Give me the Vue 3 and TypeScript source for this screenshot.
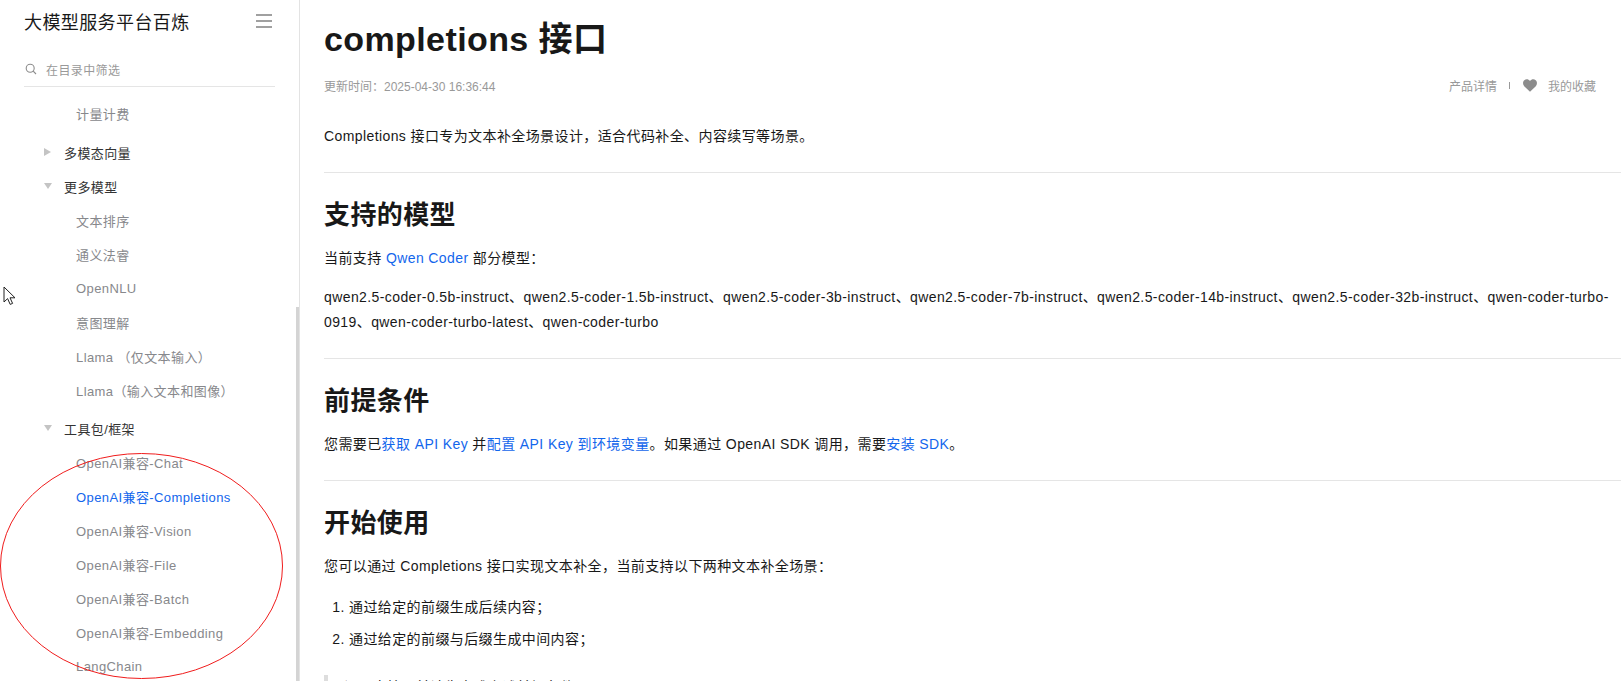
<script setup lang="ts">
interface NavRow { label: string; kind: 'leaf' | 'open' | 'closed' | 'active'; gap?: number }
const rows: NavRow[] = [
  { label: '计量计费', kind: 'leaf' },
  { label: '多模态向量', kind: 'closed', gap: 5 },
  { label: '更多模型', kind: 'open' },
  { label: '文本排序', kind: 'leaf' },
  { label: '通义法睿', kind: 'leaf' },
  { label: 'OpenNLU', kind: 'leaf' },
  { label: '意图理解', kind: 'leaf' },
  { label: 'Llama （仅文本输入）', kind: 'leaf' },
  { label: 'Llama（输入文本和图像）', kind: 'leaf' },
  { label: '工具包/框架', kind: 'open', gap: 4 },
  { label: 'OpenAI兼容-Chat', kind: 'leaf' },
  { label: 'OpenAI兼容-Completions', kind: 'active' },
  { label: 'OpenAI兼容-Vision', kind: 'leaf' },
  { label: 'OpenAI兼容-File', kind: 'leaf' },
  { label: 'OpenAI兼容-Batch', kind: 'leaf' },
  { label: 'OpenAI兼容-Embedding', kind: 'leaf' },
  { label: 'LangChain', kind: 'leaf' }
]
</script>

<template>
  <div class="page">
    <aside class="side">
      <div class="brand">
        <span class="brand-name">大模型服务平台百炼</span>
        <svg class="menu" width="18" height="16" viewBox="0 0 18 16"><path d="M1 2h16M1 8h16M1 14h16" stroke="#a0a0a0" stroke-width="2" fill="none" /></svg>
      </div>
      <div class="search">
        <svg width="12" height="12" viewBox="0 0 12 12"><circle cx="5.2" cy="5.2" r="4" stroke="#8c8c8c" stroke-width="1.1" fill="none" /><path d="M8.2 8.2l2.8 2.8" stroke="#8c8c8c" stroke-width="1.1" /></svg>
        <span>在目录中筛选</span>
      </div>
      <nav class="nav">
        <div
          v-for="r in rows"
          :key="r.label"
          class="row"
          :class="r.kind"
          :style="r.gap ? { marginTop: r.gap + 'px' } : undefined"
        >
          <svg v-if="r.kind === 'closed'" class="tri" width="8" height="10" viewBox="0 0 8 10"><path d="M0 1l7 4-7 4z" fill="#c4c4c4" /></svg>
          <svg v-if="r.kind === 'open'" class="tri" width="8" height="10" viewBox="0 0 8 10"><path d="M0 2h8L4 8z" fill="#c4c4c4" /></svg>
          <span>{{ r.label }}</span>
        </div>
      </nav>
      <div class="thumb"></div>
    </aside>
    <main class="main">
      <h1>completions 接口</h1>
      <div class="meta">
        <span>更新时间：2025-04-30 16:36:44</span>
        <div class="meta-right">
          <span>产品详情</span>
          <i class="sep"></i>
          <svg class="heart" width="14" height="13" viewBox="0 0 14 13"><path d="M7 12.8L1.2 7.2C-.4 5.4-.3 2.6 1.3 1.2 3 -.2 5.6.1 7 2 8.4.1 11-.2 12.7 1.2 14.3 2.6 14.4 5.4 12.8 7.2z" fill="#8c8c8c" /></svg>
          <span>我的收藏</span>
        </div>
      </div>
      <p class="intro">Completions 接口专为文本补全场景设计，适合代码补全、内容续写等场景。</p>
      <hr />
      <h2>支持的模型</h2>
      <p class="lead">当前支持 <a>Qwen Coder</a> 部分模型：</p>
      <p class="models">qwen2.5-coder-0.5b-instruct、qwen2.5-coder-1.5b-instruct、qwen2.5-coder-3b-instruct、qwen2.5-coder-7b-instruct、qwen2.5-coder-14b-instruct、qwen2.5-coder-32b-instruct、qwen-coder-turbo-0919、qwen-coder-turbo-latest、qwen-coder-turbo</p>
      <hr />
      <h2>前提条件</h2>
      <p class="tight">您需要已<a>获取 API Key</a> 并<a>配置 API Key 到环境变量</a>。如果通过 OpenAI SDK 调用，需要<a>安装 SDK</a>。</p>
      <hr />
      <h2>开始使用</h2>
      <p>您可以通过 Completions 接口实现文本补全，当前支持以下两种文本补全场景：</p>
      <ol>
        <li>通过给定的前缀生成后续内容；</li>
        <li>通过给定的前缀与后缀生成中间内容；</li>
      </ol>
      <blockquote>调用本接口前请先完成上述前提条件</blockquote>
    </main>
    <svg class="ring" width="286" height="230" viewBox="0 0 286 230"><ellipse cx="142.5" cy="114" rx="141" ry="112.5" fill="none" stroke="#f01c1c" stroke-width="1" /></svg>
    <svg class="cursor" width="14" height="20" viewBox="0 0 14 20"><path d="M1 1v15l3.6-3.4 2.6 5.8 2.4-1-2.6-5.6H12z" fill="#fff" stroke="#222" stroke-width="1" /></svg>
  </div>
</template>

<style>
html, body { margin: 0; overflow: hidden; background: #fff; }
</style>

<style scoped>
.page {
  position: relative;
  display: flex;
  width: 1621px;
  height: 681px;
  overflow: hidden;
  font-family: "Liberation Sans", "Noto Sans CJK SC", sans-serif;
  letter-spacing: 0.4px;
  color: #181818;
}
.side {
  position: relative;
  flex: none;
  box-sizing: border-box;
  width: 300px;
  padding: 0 24px;
  border-right: 1px solid #e3e3e3;
  overflow: hidden;
}
.brand {
  display: flex;
  align-items: center;
  justify-content: space-between;
  height: 44px;
  margin-top: -1px;
  padding-right: 2px;
}
.brand-name { font-size: 18px; color: #181818; }
.search {
  display: flex;
  align-items: center;
  gap: 9px;
  height: 34px;
  padding-top: 9px;
  padding-left: 1px;
  border-bottom: 1px solid #e5e5e5;
  font-size: 12px;
  color: #999;
}
.nav { padding-top: 9px; }
.row {
  display: flex;
  align-items: center;
  height: 34px;
  padding-left: 52px;
  font-size: 13px;
  color: #87888c;
  white-space: nowrap;
}
.row.open, .row.closed { padding-left: 20px; color: #333; }
.row.active { color: #1366ec; }
.tri { margin-right: 12px; }
.thumb {
  position: absolute;
  right: 0;
  top: 307px;
  bottom: 0;
  width: 3px;
  background: #d4d4d4;
}
.main {
  flex: 1;
  min-width: 0;
  padding-left: 24px;
  font-size: 14px;
}
h1 {
  margin: 15px 0 0;
  font-size: 34px;
  line-height: 48px;
  font-weight: 700;
}
.meta {
  display: flex;
  align-items: center;
  justify-content: space-between;
  height: 20px;
  margin-top: 12px;
  padding-right: 25px;
  font-size: 12px;
  letter-spacing: 0;
  color: #999;
}
.meta-right { display: flex; align-items: center; gap: 12px; }
.sep { width: 1px; height: 7px; background: #999; }
.heart { margin: 0 -1px 0 1px; }
p { margin: 0 0 12px; line-height: 25px; }
.intro { margin-top: 29px; margin-bottom: 11px; }
hr { margin: 23px 0 0; border: 0; border-top: 1px solid #e5e5e5; }
h2 {
  margin: 24px 0 13px;
  font-size: 26px;
  line-height: 36px;
  font-weight: 700;
}
a { color: #1366ec; }
.lead { margin-bottom: 14px; }
.models { margin-bottom: 0; }
.tight { margin-bottom: 11px; }
ol { margin: 16px 0 0; padding-left: 25px; }
li { line-height: 25px; margin-bottom: 7px; }
blockquote {
  margin: 23px 0 0;
  padding-left: 16px;
  border-left: 4px solid #ddd;
  line-height: 25px;
}
.ring { position: absolute; left: -1px; top: 452px; pointer-events: none; }
.cursor { position: absolute; left: 3px; top: 286px; pointer-events: none; }
</style>
